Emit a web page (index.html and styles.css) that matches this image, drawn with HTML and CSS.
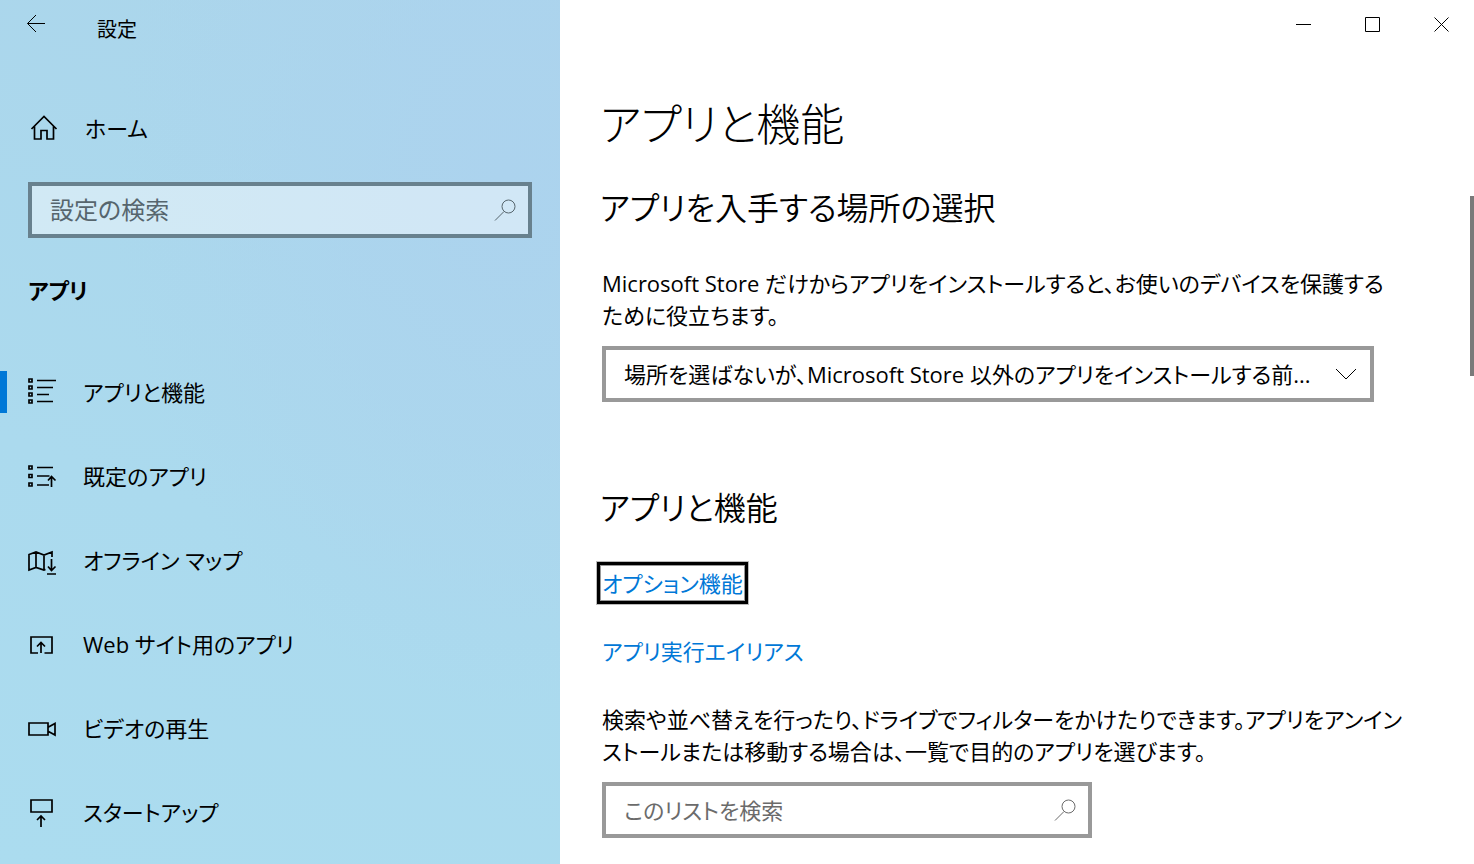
FILE: index.html
```
<!DOCTYPE html>
<html lang="ja">
<head>
  <meta charset="UTF-8">
  <meta name="viewport" content="width=device-width, initial-scale=1.0">
  <title>設定</title>
  <link rel="stylesheet" href="styles.css">
</head>
<body>
  <div class="window">

    <aside class="sidebar">
      <header class="sidebar__title">
        <button class="back" aria-label="戻る">
          <svg width="20" height="20" viewBox="0 0 20 20"><path d="M19 9.5H1.5M10 1L1.5 9.5L10 18"/></svg>
        </button>
        <span class="sidebar__name">設定</span>
      </header>

      <a class="home" href="#">
        <svg class="icon" width="32" height="32" viewBox="0 0 32 32"><path d="M3.500 17L16 4.500L28.500 17M6.500 14.500V27H13V18.500H19V27H25.500V14.500"/></svg>
        <span>ホーム</span>
      </a>

      <label class="search search--glass">
        <input type="text" placeholder="設定の検索" aria-label="設定の検索">
        <svg width="24" height="24" viewBox="0 0 24 24"><circle cx="15.500" cy="8.500" r="6.500"/><path d="M11 13.500L2 22.500"/></svg>
      </label>

      <h2 class="sidebar__group">アプリ</h2>

      <nav class="nav">
        <a class="nav__item nav__item--active" href="#">
          <svg class="icon" width="32" height="32" viewBox="0 0 32 32"><path d="M3 3h3v3h-3zM3 10h3v3h-3zM3 17h3v3h-3zM3 24h3v3h-3zM11 4.500H30M11 11.500H27M11 18.500H23M11 25.500H27"/></svg>
          <span>アプリと機能</span>
        </a>
        <a class="nav__item" href="#">
          <svg class="icon" width="32" height="32" viewBox="0 0 32 32"><path d="M3 6h3v3h-3zM3 14.500h3v3h-3zM3 23h3v3h-3zM11 7.500H27M11 16H23.500M11 25H23M25.500 27V16.500M22 20.500L25.500 16.500L29.500 20.500"/></svg>
          <span>既定のアプリ</span>
        </a>
        <a class="nav__item" href="#">
          <svg class="icon" width="32" height="32" viewBox="0 0 32 32"><path d="M19.500 25.500L18 26L10 23.500L3 26V10.500L10 8L18 11L26 8V13M10 8V23.500M18 11V26M25.500 15V26M22 22.500L25.500 26.500L29.500 22.500M21 30H30"/></svg>
          <span>オフライン マップ</span>
        </a>
        <a class="nav__item" href="#">
          <svg class="icon" width="32" height="32" viewBox="0 0 32 32"><path d="M12 25H5V9H26V25H18.500M15 25V14.500M11 18.500L15 14.500L19 18.500"/></svg>
          <span>Web サイト用のアプリ</span>
        </a>
        <a class="nav__item" href="#">
          <svg class="icon" width="32" height="32" viewBox="0 0 32 32"><path d="M3 11H22V23H3zM22.500 15L29 11.500V23L22.500 19.500"/></svg>
          <span>ビデオの再生</span>
        </a>
        <a class="nav__item" href="#">
          <svg class="icon" width="32" height="32" viewBox="0 0 32 32"><path d="M5 4H26V16H5zM15 31V20M11 24L15 20L19 24"/></svg>
          <span>スタートアップ</span>
        </a>
      </nav>
    </aside>

    <div class="page">
      <div class="controls">
        <button aria-label="最小化"><svg width="15" height="15" viewBox="0 0 15 15"><path d="M0 7.500H15"/></svg></button>
        <button aria-label="最大化"><svg width="15" height="15" viewBox="0 0 15 15"><path d="M.5 .5H14.500V14.500H.5z"/></svg></button>
        <button aria-label="閉じる"><svg width="15" height="15" viewBox="0 0 15 15"><path d="M.5 .5L14.500 14.500M14.500 .5L.5 14.500"/></svg></button>
      </div>

      <main class="content">
        <h1>アプリと機能</h1>

        <section class="source">
          <h2>アプリを入手する場所の選択</h2>
          <p><label for="source">Microsoft Store だけからアプリをインストールすると、お使いのデバイスを保護する<br>ために役立ちます。</label></p>
          <div class="dropdown">
            <select id="source">
              <option>場所を選ばないが、Microsoft Store 以外のアプリをインストールする前...</option>
            </select>
            <svg width="24" height="24" viewBox="0 0 24 24"><path d="M2 7L12 17L22 7"/></svg>
          </div>
        </section>

        <section class="apps">
          <h2>アプリと機能</h2>
          <a class="link link--focus" href="#">オプション機能</a>
          <a class="link" href="#">アプリ実行エイリアス</a>
          <p><label for="list-search">検索や並べ替えを行ったり、ドライブでフィルターをかけたりできます。アプリをアンイン<br>ストールまたは移動する場合は、一覧で目的のアプリを選びます。</label></p>
          <div class="search search--list">
            <input id="list-search" type="text" placeholder="このリストを検索">
            <svg width="24" height="24" viewBox="0 0 24 24"><circle cx="15.500" cy="8.500" r="6.500"/><path d="M11 13.500L2 22.500"/></svg>
          </div>
        </section>
      </main>

      <div class="scrollbar"></div>
    </div>

  </div>
</body>
</html>
```
FILE: styles.css
```
* {
  box-sizing: border-box;
  margin: 0;
  padding: 0;
}
:root {
  --accent: #0078d7;
  --border: #999;
  --muted: #6b6b6b;
}
body {
  overflow: hidden;
  color: #000;
  background: #fff;
  font-family: "Open Sans", "Noto Sans CJK JP", sans-serif;
  font-size: 22px;
  line-height: 32px;
  /* proportional kana */
  font-feature-settings: "palt";
}
a {
  color: inherit;
  text-decoration: none;
}
button,
input,
select {
  border: 0;
  outline: 0;
  color: inherit;
  background: transparent;
  font: inherit;
  font-feature-settings: inherit;
}
svg {
  display: block;
  flex: none;
  fill: none;
  stroke: currentColor;
  stroke-width: 1;
}
.icon {
  stroke-width: 1.7;
}
.window {
  display: flex;
  height: 100vh;
}

/* Sidebar */

.sidebar {
  flex: 0 0 560px;
  overflow: hidden;
  background:
    radial-gradient(ellipse at 90% 20%, #acd3ee 0%, rgba(172, 211, 238, 0) 55%),
    linear-gradient(200deg, #abd5eb, #abdaee 60%, #abdcef);
}
.sidebar__title {
  display: flex;
  align-items: center;
  height: 56px;
  padding-left: 26px;
}
.back {
  padding-bottom: 8px;
}
.sidebar__name {
  margin-left: 51px;
  padding-top: 4px;
  font-size: 20px;
}
.home {
  display: flex;
  align-items: center;
  gap: 25px;
  height: 64px;
  margin-top: 40px;
  margin-bottom: 22px;
  padding-left: 28px;
  padding-bottom: 1px;
}
.search {
  display: flex;
  align-items: center;
  height: 56px;
  padding-left: 18px;
  padding-right: 11px;
  border: 4px solid var(--border);
  color: var(--muted);
}
.search input {
  flex: 1;
  min-width: 0;
}
.search input::placeholder {
  color: inherit;
  opacity: 1;
}
.search--glass {
  margin: 0 28px;
  border-color: #68818e;
  color: #56656d;
  background: rgba(255, 255, 255, 0.45);
  font-size: 24px;
}
.sidebar__group {
  margin: 36px 28px 44px;
  font-size: 22px;
  font-weight: 700;
}
.nav__item {
  display: flex;
  align-items: center;
  gap: 25px;
  height: 84px;
  padding-left: 26px;
}
.nav__item--active {
  padding-left: 0;
}
.nav__item--active::before {
  content: "";
  width: 7px;
  height: 42px;
  margin-right: -6px;
  background: var(--accent);
}

/* Page */

.page {
  position: relative;
  flex: 1;
  min-width: 0;
}
.controls {
  display: flex;
  justify-content: flex-end;
  gap: 22px;
  padding-right: 9px;
}
.controls button {
  display: flex;
  align-items: center;
  justify-content: center;
  width: 47px;
  height: 49px;
}
.content {
  padding: 43px 60px 0 42px;
}
h1 {
  font-size: 44px;
  font-weight: 300;
  line-height: 64px;
}
.content h2 {
  font-size: 32px;
  font-weight: 350;
  line-height: 48px;
}
.content h1,
.content h2 {
  margin-left: -2px;
}
.source h2 {
  margin-top: 28px;
  margin-bottom: 35px;
}
.content p {
  white-space: nowrap;
}
.dropdown {
  display: grid;
  align-items: center;
  max-width: 772px;
  height: 56px;
  margin-top: 15px;
  border: 4px solid var(--border);
}
.dropdown select,
.dropdown svg {
  grid-area: 1 / 1;
}
.dropdown select {
  width: 100%;
  height: 48px;
  padding-left: 18px;
  padding-right: 44px;
  appearance: none;
  text-overflow: ellipsis;
}
.dropdown svg {
  justify-self: end;
  margin-right: 12px;
  pointer-events: none;
}
.apps h2 {
  margin-top: 82px;
  margin-bottom: 35px;
}
.link {
  display: block;
  width: fit-content;
  color: var(--accent);
}
.link--focus {
  margin-bottom: 36px;
  box-shadow:
    0 0 0 1px #fff,
    0 0 0 2px #999,
    0 0 0 5px #000,
    0 0 0 6px #bbb;
}
.link + p {
  margin-top: 36px;
}
.search--list {
  max-width: 490px;
  margin-top: 15px;
}
.scrollbar {
  position: absolute;
  top: 196px;
  right: 0;
  width: 4px;
  height: 180px;
  background: #7a7a7a;
}
```
